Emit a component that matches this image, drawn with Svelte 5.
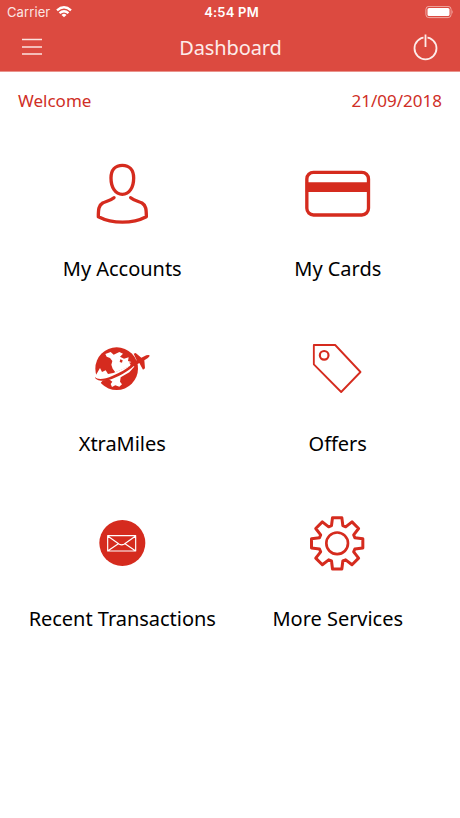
<script lang="ts">
	let { user = 'Welcome', date = '21/09/2018' }: { user?: string; date?: string } = $props();

	const tiles = [
		{ id: 'accounts', label: 'My Accounts', box: '-9 -3 270 270' },
		{ id: 'cards', label: 'My Cards', box: '6.5 -3 270 270' },
		{ id: 'miles', label: 'XtraMiles', box: '-9 -18 270 270' },
		{ id: 'offers', label: 'Offers', box: '-7.5 -18 270 270' },
		{ id: 'transactions', label: 'Recent Transactions', box: '-9 -18 270 270' },
		{ id: 'services', label: 'More Services', box: '-7.5 -18 270 270' }
	];

	// one gear tooth, repeated every 45 degrees
	const tooth = [[-17, -53], [-14, -77], [14, -77], [17, -53]];
	const gear = Array.from({ length: 8 }, (_, i) => {
		const a = (i * Math.PI) / 4;
		return tooth.map(([x, y]) =>
			`${(128 + x * Math.cos(a) - y * Math.sin(a)).toFixed(1)},${(115 + x * Math.sin(a) + y * Math.cos(a)).toFixed(1)}`
		);
	}).flat().join(' ');
</script>

<div class="screen">
	<header>
		<div class="status">
			<div class="carrier">
				<span>Carrier</span>
				<svg width="16" height="12" viewBox="0 0 16 12" fill="none" stroke="#fff" stroke-width="2.3">
					<path d="M1 4.4Q8 -1.8 15 4.4M3.5 7.2Q8 3.2 12.5 7.2" />
					<path d="M8 11.2L5.5 8.9Q8 6.8 10.5 8.9Z" fill="#fff" stroke="none" />
				</svg>
			</div>
			<span class="time">4:54 PM</span>
			<svg class="battery" width="29" height="13" viewBox="0 0 29 13">
				<rect x="0.9" y="0.4" width="25.2" height="11.2" rx="3" fill="none" stroke="#f0aaa4" />
				<rect x="2.5" y="2" width="22" height="8" rx="1.6" fill="#fff" />
				<path d="M27.3 4q1.5 2 0 4z" fill="#f0aaa4" />
			</svg>
		</div>
		<nav>
			<button aria-label="Menu">
				<svg width="20" height="18" viewBox="0 0 20 18" stroke="#fbe3e0" stroke-width="1.5">
					<path d="M0 1.5H20M0 9H20M0 16H20" />
				</svg>
			</button>
			<h1>Dashboard</h1>
			<button aria-label="Log out">
				<svg width="26" height="28" viewBox="0 0 26 28" fill="none" stroke="#fdecea" stroke-width="1.8">
					<circle cx="13.5" cy="15.3" r="11" />
					<path d="M13.5 1.5V14" stroke="#dc4a40" stroke-width="4" />
					<path d="M13.5 1.5V14" />
				</svg>
			</button>
		</nav>
	</header>

	<div class="greeting">
		<span>{user}</span>
		<span>{date}</span>
	</div>

	<main>
		{#each tiles as tile (tile.id)}
			<div class="tile">
				<svg class="icon" width="90" height="90" viewBox={tile.box}>
					{#if tile.id === 'accounts'}
						<path d="M127 46C148 46 161 60 161 84C161 112 148 133 127 133C106 133 93 112 93 84C93 60 106 46 127 46Z" stroke-width="10" />
						<path d="M102 143C91 152 78 154 68 159C56 166 55 178 55 200C98 222 157 222 199 200C199 178 198 166 186 159C176 154 163 152 152 143" stroke-width="10" />
					{:else if tile.id === 'cards'}
						<rect x="51" y="67" width="185" height="128" rx="20" stroke-width="10" />
						<path class="solid" d="M48 97H239V126H48Z" />
					{:else if tile.id === 'miles'}
						<circle class="solid" cx="110" cy="116" r="64" />
						<path class="land" d="M76 72L92 66L101 74L118 66L129 71L120 80L132 86L146 82L144 93L154 96L150 108L128 118L106 127L98 116L94 104L97 93L90 84L80 80Z" />
						<path class="land" d="M44 142L60 114L66 126L77 121L84 132L100 129L112 124L150 107L164 109L148 127L122 142L120 155L126 163L118 170L106 166L96 171L92 162L97 155L89 149L69 151L61 160L49 151Z" />
						<path class="solid" d="M121 88L128 91L126 98L119 96Z" />
						<path class="solid" d="M45 141C52 150 72 149 98 137C120 128 140 116 154 104L147 98L154 97L163 95L170 91L161 71L167 69L184 83L199 76Q209 73 209 78Q206 84 193 91L195 115L189 119L178 99L169 104L167 112L161 108C143 125 112 143 86 150C65 155 47 152 45 141Z" />
					{:else if tile.id === 'offers'}
						<path d="M58 45H122L198 126L140 186L58 103Z" stroke-width="5.5" />
						<circle cx="89" cy="76" r="13" stroke-width="6.5" />
					{:else if tile.id === 'transactions'}
						<circle class="solid" cx="127" cy="114" r="69" />
						<path class="mail" d="M83 92H167V138H83ZM83 93L118 118Q125 121 132 118L167 93M84 137L115 116M166 137L135 116" />
					{:else}
						<polygon points={gear} stroke-width="9" />
						<circle cx="128" cy="115" r="32.5" stroke-width="8" />
					{/if}
				</svg>
				<span class="label">{tile.label}</span>
			</div>
		{/each}
	</main>
</div>

<style>
	:global(body) {
		margin: 0;
		background: #fff;
	}

	.screen {
		min-height: 818px;
		background: #fff;
		font-family: 'Noto Sans', sans-serif;
	}

	header {
		height: 72px;
		background: #dc4a40;
		border-bottom: 1px solid #e9938c;
		box-sizing: border-box;
		color: #fff;
	}

	.status {
		display: grid;
		grid-template-columns: 1fr auto 1fr;
		align-items: center;
		height: 24px;
		padding: 0 6px 0 7px;
		font: 13px/24px Inter, sans-serif;
	}

	.carrier {
		display: flex;
		align-items: center;
		gap: 6px;
		color: #fbe6e4;
		letter-spacing: 0.1px;
	}

	.time {
		padding-left: 2px;
		font-weight: 600;
		letter-spacing: 0.2px;
	}

	.battery {
		justify-self: end;
	}

	nav {
		display: flex;
		align-items: center;
		justify-content: space-between;
		height: 46px;
		padding: 0 21px 0 22px;
	}

	button {
		display: flex;
		justify-content: center;
		width: 28px;
		padding: 0;
		border: 0;
		background: none;
	}

	nav button:first-child {
		width: 20px;
		margin-right: 8px;
	}

	h1 {
		margin: 0;
		font-size: 20px;
		font-weight: 400;
		letter-spacing: -0.1px;
		color: #fdecea;
	}

	.greeting {
		display: flex;
		justify-content: space-between;
		padding: 17px 18px 0;
		font-size: 17px;
		line-height: 24px;
		color: #cf2e26;
	}

	main {
		display: grid;
		grid-template-columns: 1fr 1fr;
		grid-auto-rows: 175px;
		padding: 36px 15px 0 14px;
	}

	.tile {
		display: flex;
		flex-direction: column;
		align-items: center;
		gap: 16px;
	}

	.icon {
		fill: none;
		stroke: #d52b1e;
		stroke-linecap: round;
		stroke-linejoin: round;
	}

	.solid {
		fill: #d52b1e;
		stroke: none;
	}

	.land {
		fill: #fff;
		stroke: none;
	}

	.mail {
		stroke: #fff;
		stroke-width: 3.5;
	}

	.label {
		padding-left: 1px;
		font-size: 20px;
		line-height: 28px;
		letter-spacing: -0.03px;
		color: #000;
		white-space: nowrap;
	}
</style>
